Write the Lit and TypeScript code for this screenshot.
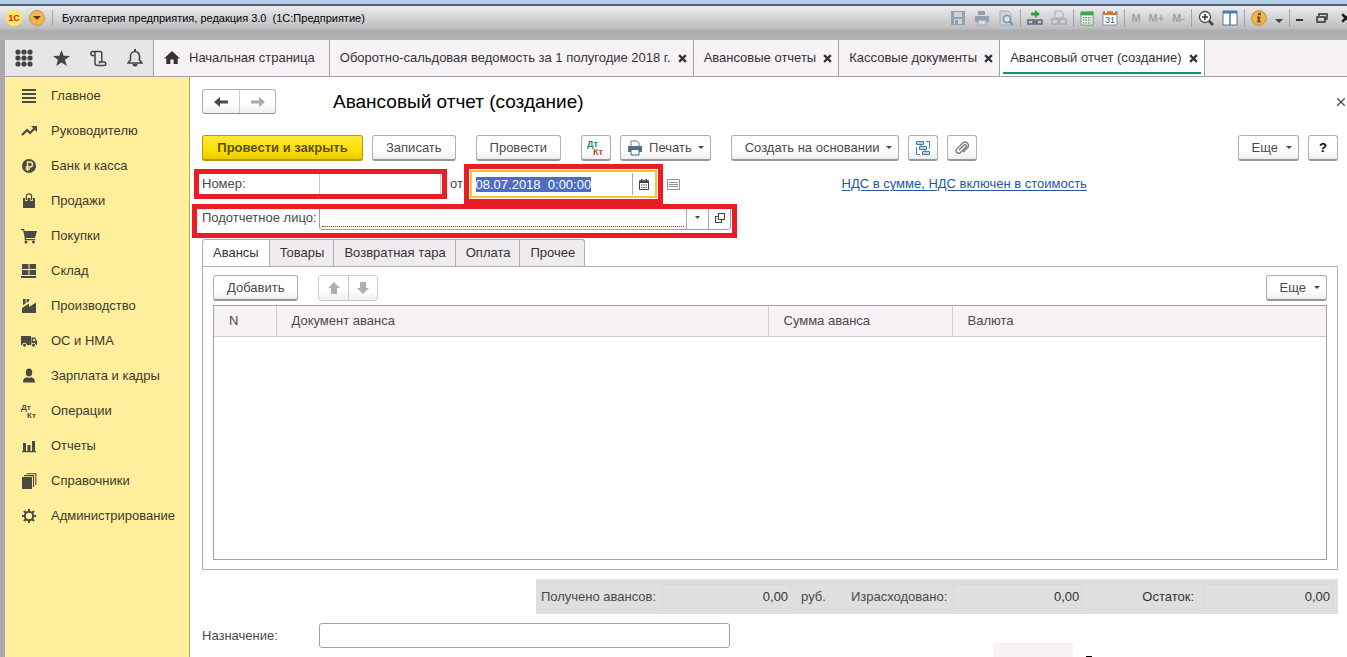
import { LitElement, html, css, svg, nothing } from "lit";
import { customElement, state, query } from "lit/decorators.js";
import { classMap } from "lit/directives/class-map.js";

const icon = (w: number, h: number, body: unknown, vb = `0 0 ${w} ${h}`) =>
  html`<svg class="ico" width=${w} height=${h} viewBox=${vb} fill="currentColor" aria-hidden="true">${body}</svg>`;

const caret = () => icon(6, 3, svg`<path d="M0 0h6L3 3z"/>`);
const cross = (size = 8, width = 2) =>
  icon(size, size, svg`<path d="M1 1l6 6M7 1L1 7" stroke="currentColor" stroke-width=${width} fill="none"/>`, "0 0 8 8");

const arrowLeft = svg`<path d="M0 5l6-5v3.600h8v2.800H6V10z"/>`;
const arrowRight = svg`<path d="M14 5L8 0v3.600H0v2.800h8V10z"/>`;

const sections = [
  { name: "Главное", body: svg`<path d="M1 1h14v2H1zM1 5h14v2H1zM1 9h14v2H1zM1 13h14v2H1z"/>` },
  { name: "Руководителю", body: svg`<path d="M1 12l5-5 3 3 5-5" fill="none" stroke="currentColor" stroke-width="2.2"/><path d="M10 3h6v6z"/>` },
  { name: "Банк и касса", body: svg`<circle cx="8" cy="8" r="7"/><path d="M6.5 13V4H9a2.3 2.3 0 0 1 0 5H4.6M4.6 11H9" fill="none" stroke="#ffee9c" stroke-width="1.4"/>` },
  { name: "Продажи", body: svg`<path d="M2 5h12v10H2z"/><path d="M5.4 8V3a2.6 2 0 0 1 5.200 0v5" fill="none" stroke="#ffee9c" stroke-width="2.4"/><path d="M5.400 7V3a2.600 2.200 0 0 1 5.200 0v4" fill="none" stroke="currentColor" stroke-width="1.200"/>` },
  { name: "Покупки", body: svg`<path d="M0 1h3l.6 2H16l-2 7H5v1h9v1.300H3.700V10L2.200 2.300H0z"/><circle cx="5" cy="14" r="1.500"/><circle cx="12.500" cy="14" r="1.500"/>` },
  { name: "Склад", body: svg`<path d="M1 1h6.500v5H1zM8.500 1H15v5H8.500zM1 7h6.500v5H1zM8.500 7H15v5H8.500zM0 13h15v2H0z"/>` },
  { name: "Производство", body: svg`<path d="M1 15V10l7-4.500V9l7-4.500V15z"/><path d="M2 1h2.600v4.500L2 7.200zM5.600 1h2.600v2.300L5.600 5z"/>` },
  { name: "ОС и НМА", body: svg`<path d="M0 3h10v9H0zM10.500 4.500H14l2 3.500v4h-5.500z"/><path d="M12 6h1.500l1 2H12z" fill="#ffee9c"/><circle cx="3.500" cy="12.200" r="2" stroke="#ffee9c" stroke-width="1"/><circle cx="12.500" cy="12.200" r="2" stroke="#ffee9c" stroke-width="1"/>` },
  { name: "Зарплата и кадры", body: svg`<ellipse cx="8" cy="4.500" rx="3.200" ry="4"/><path d="M2 14.500c0-4 2-5 4-5.300L8 10l2-.8c2 .3 4 1.300 4 5.300z"/>` },
  { name: "Операции", body: svg`<text x="0" y="7" font-size="8" font-weight="700">Дт</text><text x="6" y="15" font-size="8" font-weight="700">Кт</text>` },
  { name: "Отчеты", body: svg`<path d="M1 13h14v1.300H1zM2 5h3v8H2zM6.500 7h3v6h-3zM11 3h3v10h-3z"/>` },
  { name: "Справочники", body: svg`<path d="M1 4h10v12H1z"/><path d="M3 2.600h9.500V14M5.500.700h9.300V12" fill="none" stroke="currentColor" stroke-width="1.100"/>` },
  { name: "Администрирование", body: svg`<circle cx="8" cy="8" r="4.200" fill="none" stroke="currentColor" stroke-width="2"/><path d="M8 1v3M8 12v3M1 8h3M12 8h3M3 3l2.200 2.200M10.800 10.800L13 13M13 3l-2.200 2.200M5.200 10.800L3 13" stroke="currentColor" stroke-width="2"/>` },
];

const windows = [
  "Оборотно-сальдовая ведомость за 1 полугодие 2018 г.",
  "Авансовые отчеты",
  "Кассовые документы",
  "Авансовый отчет (создание)",
];

const pages = ["Авансы", "Товары", "Возвратная тара", "Оплата", "Прочее"];

const printer = svg`<path d="M4 1h6l2 2v4H4z" fill="#fff" stroke="#6d7b88"/><path d="M1 6h14v6H1z" fill="#4c7391"/><path d="M4 9.500h8V15H4z" fill="#fff" stroke="#4c6478"/>`;

const tools = [
  { label: "Сохранить", w: 16, gap: false, body: svg`<g fill="#93a1ae"><path d="M1 1h14v14H1z"/><path d="M4 2h8v5H4zM4 9h8v5H4z" fill="#cdd4da"/><path d="M5 10h3v4H5z"/></g>` },
  { label: "Печать", w: 16, gap: false, body: svg`<g fill="#93a1ae"><path d="M4 1h7v4H4zM1 6h14v6H1z"/><path d="M4 10h8v5H4z" fill="#d9dde1" stroke="#93a1ae"/></g>` },
  { label: "Просмотр", w: 16, gap: false, body: svg`<path d="M2 1h8l3 3v11H2z" fill="#ccd3d9" stroke="#a3afb9"/><circle cx="9" cy="9" r="3.500" fill="#dfe5ea" stroke="#7890a4" stroke-width="1.500"/><path d="M11.500 11.500L15 15" stroke="#7890a4" stroke-width="2"/>` },
  { label: "Получить ссылку", w: 16, gap: true, body: svg`<path d="M4 2.500h4V0l5 4-5 4V5.500H4z" fill="#2fa62f"/><path d="M1 10h6v4H1zM9 10h6v4H9zM5 12h6" fill="none" stroke="#5a6672" stroke-width="1.500"/>` },
  { label: "Перейти по ссылке", w: 16, gap: false, body: svg`<path d="M4 1h6l2 2v5H4z" fill="#dcdfe2" stroke="#a2a9b0"/><path d="M1 9h6v5H1zM9 9h6v5H9z" fill="#d2d5d8" stroke="#a2a9b0" stroke-width="1.500"/>` },
  { label: "Калькулятор", w: 14, gap: true, body: svg`<path d="M1 1h14v15H1z" fill="#f3f6f3" stroke="#5d9868"/><path d="M1 1h14v4H1z" fill="#38a54a"/><path d="M3 7.500h10M3 10.500h10M3 13.500h10" stroke="#5b8e68" stroke-width="1.500" stroke-dasharray="2 1"/>` },
  { label: "Календарь", w: 16, gap: false, body: svg`<path d="M1 2h14v13H1z" fill="#fff" stroke="#8c8f94"/><path d="M1 1.500h14V5H1z" fill="#c8783d"/><path d="M4 0v3M12 0v3" stroke="#fff" stroke-width="1.500"/><text x="3" y="13" font-size="9" fill="#3d5a80">31</text>` },
];

@customElement("app-root")
export class AppRoot extends LitElement {
  @state() private page = 0;
  @query("#date") private dateField!: HTMLInputElement;

  static styles = css`
    :host {
      display: flex;
      flex-direction: column;
      height: 100vh;
      overflow: hidden;
      box-sizing: border-box;
      font: 13px/16px "Liberation Sans", Arial, sans-serif;
      color: #4a4a4a;
      background: #fff;
    }
    *, *::before, *::after { box-sizing: border-box; }
    button, input { font: inherit; color: inherit; margin: 0; }
    button { background: none; border: 0; padding: 0; }
    h1, ul { margin: 0; padding: 0; font-weight: 400; }
    .ico { display: block; flex: none; }

    .backdrop { flex: none; height: 6px; background: #b3cde9; border-bottom: 2px solid #59636f; }
    .titlebar {
      flex: none;
      height: 34px;
      padding: 0 0 10px 6px;
      display: flex;
      align-items: center;
      color: #1a1a1a;
      background: linear-gradient(#ececee 0, #d8d8da 10px, #bcbcbf 23px, #adadb0 24px, #b1b1b4 34px);
    }
    .brand, .drop { width: 16px; height: 16px; border-radius: 50%; display: grid; place-items: center; }
    .brand { background: #ffe75c; color: #d22a1c; font: bold 9px/16px "Liberation Sans", sans-serif; }
    .drop { margin-left: 7px; background: #f3b54f; border: 1px solid #c99345; color: #5b3a10; }
    .apptitle { margin-left: 7px; padding-left: 9px; border-left: 1px solid #a6a6a9; font-size: 11px; white-space: nowrap; color: #000; }
    .tools { margin-left: auto; display: flex; align-items: center; gap: 8px; }
    .tools button { display: block; }
    .rule { width: 1px; height: 18px; background: #a3a3a6; margin: 0 -2px; }
    .memory { display: flex; gap: 8px; font-weight: 700; font-size: 11px; color: #a99e98; }
    .winctl { display: flex; align-items: center; gap: 13px; margin: 0 -4px 0 0; }

    .frame { flex: 1; min-height: 0; display: flex; flex-direction: column; border-left: 5px solid #a9a9ac; }
    .tabs { flex: none; height: 37px; display: flex; background: #f6f2f6; border-bottom: 1px solid #a0a0a0; color: #333; }
    .quick { width: 149px; display: flex; align-items: center; justify-content: space-between; padding: 0 10px; background: #e6e6e6; border-right: 1px solid #a0a0a0; color: #444; }
    .tab { display: flex; align-items: center; gap: 7px; padding: 0 6px 0 10px; border-right: 1px solid #a0a0a0; white-space: nowrap; position: relative; }
    .tab.home { padding-right: 14px; gap: 9px; }
    .tab.active { background: #fff; }
    .tab.active::after { content: ""; position: absolute; left: 3px; right: 3px; bottom: 2px; height: 2px; background: #18925a; }

    .body { flex: 1; min-height: 0; display: flex; }
    .sections { flex: none; width: 185px; background: #ffee9c; border-right: 1px solid #b5a642; padding-top: 1px; list-style: none; color: #3c3a2c; }
    .sections a { display: flex; align-items: center; gap: 14px; height: 35px; padding-left: 16px; color: inherit; text-decoration: none; white-space: nowrap; }
    .sections .ico { color: #4b4a42; }

    .main { flex: 1; min-width: 0; padding: 12px 9px 0 12px; display: flex; flex-direction: column; }
    .head { display: flex; align-items: center; height: 25px; flex: none; }
    .head h1 { flex: 1; margin-left: 57px; font-size: 19px; line-height: 24px; color: #000; }
    .head .close { margin-right: -8px; }
    .pair { display: flex; border: 1px solid #b0b0b0; border-bottom-color: #8f8f8f; border-radius: 3px; background: linear-gradient(#fff 60%, #f0eef0); }
    .pair button { width: 36px; height: 23px; display: grid; place-items: center; }
    .pair button + button { border-left: 1px solid #ccc; color: #aaa; }
    .pair.move { border-color: #ccc; color: #a9b1b8; }
    .pair.move button { width: 29px; height: 24px; }
    .pair.move button + button { color: inherit; }

    .bar { display: flex; gap: 20px; margin-top: 21px; flex: none; }
    .group { display: flex; gap: 9px; }
    .end { margin-left: auto; }
    .btn {
      height: 26px;
      min-width: 30px;
      padding: 0 13px;
      display: flex;
      align-items: center;
      justify-content: center;
      gap: 6px;
      white-space: nowrap;
      border: 1px solid #b0b0b0;
      border-bottom: 2px solid #969696;
      border-radius: 3px;
      background: linear-gradient(#fff 60%, #f0eef0);
    }
    .btn.primary { min-width: 161px; font-weight: 700; color: #594f14; border-color: #b39b10; background: linear-gradient(#ffe93a, #fddf00 60%, #eccb00); }
    .btn.menu { padding-right: 6px; }
    .btn.more { min-width: 61px; gap: 8px; }
    .btn.print { padding-left: 6px; }
    .btn.square { padding: 0; width: 30px; }
    .btn.help { padding: 0; font-weight: 700; color: #000; }

    .row { display: flex; align-items: center; flex: none; }
    .row.number { height: 26px; margin-top: 10px; }
    .row.person { height: 25px; margin-top: 8px; }
    .row label.key { width: 117px; flex: none; }
    .marked { position: relative; display: flex; align-items: center; align-self: stretch; }
    .marked::before { content: ""; position: absolute; border: 5px solid #ea1c24; pointer-events: none; z-index: 1; }
    .m-number::before { inset: -2px -6px -2px -8px; }
    .m-date::before { inset: -7px -6px; }
    .m-person::before { inset: -1px -6px -8px -10px; }
    .num { width: 122px; height: 24px; border: 1px solid #ccc; background: #fff; }
    .from { margin: 0 3px 0 9px; }
    .date { display: flex; align-items: center; width: 187px; height: 28px; border: 2px solid #ffc42e; background: #fff; color: #333; }
    .date input { width: 160px; height: 24px; padding: 0 4px; border: 0; outline: 0; }
    .date input::selection { background: #4f6bc4; color: #fff; }
    .date button { height: 22px; flex: 1; display: grid; place-items: center; border-left: 1px solid #aaa; color: #444; }
    .listicon { margin-left: 10px; color: #8a94a0; }
    .vat { margin-left: 162px; color: #2659a3; text-underline-offset: 2px; white-space: nowrap; }
    .combo { display: flex; width: 412px; height: 25px; border: 1px solid #a0a0a0; border-radius: 3px; }
    .combo .well { flex: 1; padding: 0 2px 2px; display: flex; }
    .combo input { width: 100%; border: 0; border-bottom: 1px dotted #d02020; outline: 0; background: none; }
    .combo button { width: 22px; display: grid; place-items: center; border-left: 1px solid #aaa; }

    .pages { display: flex; margin-top: 9px; flex: none; }
    .pages button { height: 28px; padding: 0 9px 0 10px; margin-bottom: -1px; border: 1px solid #b0b0b0; border-left-width: 0; background: #efebef; color: #333; }
    .pages button:first-child { padding-right: 10px; border-left-width: 1px; border-top-left-radius: 3px; }
    .pages button:last-child { border-top-right-radius: 3px; }
    .pages button.on { background: #fff; border-bottom-color: #fff; }
    .panel { flex: none; border: 1px solid #b0b0b0; padding: 8px 10px 9px; }
    .cmds { display: flex; gap: 20px; margin-bottom: 4px; }
    .grid { border: 1px solid #a0a0a0; min-height: 255px; }
    table { width: 100%; border-collapse: collapse; table-layout: fixed; }
    th { height: 30px; padding: 0 15px; text-align: left; font-weight: 400; background: #f6f2f6; border-bottom: 1px solid #ccc; border-right: 1px solid #d0d0d0; }
    th:last-child { border-right: 0; }
    .c-n { width: 62px; }
    .c-doc { width: 492px; }
    .c-sum { width: 184px; }

    .totals { flex: none; align-self: flex-end; margin-top: 9px; height: 35px; padding: 0 5px; display: flex; align-items: center; background: #dfdfdf; white-space: nowrap; }
    .totals label { display: flex; align-items: center; gap: 6px; }
    .totals input { width: 129px; height: 25px; padding: 0 2px; text-align: right; border: 1px solid #d8d8d8; background: none; color: #333; }
    .unit { margin: 0 25px 0 10px; }
    .rest { margin-left: 60px; }
    .rest label { gap: 10px; color: #333; }
    .purpose { margin-top: 9px; }
    .purpose input { width: 411px; height: 25px; border: 1px solid #a0a0a0; border-radius: 3px; }
    .next { flex: none; align-self: flex-end; display: flex; gap: 13px; margin: -5px 246px 0 0; align-items: flex-end; }
    .chip { width: 80px; height: 14px; background: #f6f2f6; }
    .stub { width: 6px; height: 1px; background: #000; }
  `;

  firstUpdated() {
    this.dateField.focus();
    this.dateField.select();
  }

  private titlebar() {
    return html`<header class="titlebar">
      <span class="brand">1С</span>
      <button class="drop" aria-label="Меню">${icon(8, 4, svg`<path d="M0 0h8L4 4z"/>`)}</button>
      <span class="apptitle">Бухгалтерия предприятия, редакция 3.0 &nbsp;(1С:Предприятие)</span>
      <div class="tools">
        ${tools.map((t) => html`${t.gap ? html`<i class="rule"></i>` : nothing}<button aria-label=${t.label}>${icon(t.w, 16, t.body, "0 0 16 16")}</button>`)}
        <i class="rule"></i>
        <span class="memory"><button>M</button><button>M+</button><button>M-</button></span>
        <i class="rule"></i>
        <button aria-label="Масштаб">${icon(16, 16, svg`<circle cx="7" cy="7" r="5.500" fill="#fff" stroke="#444" stroke-width="1.300"/><path d="M4 7h6M7 4v6" stroke="#333" stroke-width="1.500"/><path d="M11 11l4 4" stroke="#444" stroke-width="2.500"/>`)}</button>
        <button aria-label="Панели">${icon(16, 16, svg`<path d="M1 1h14v14H1z" fill="#fff" stroke="#55789b"/><path d="M1 1h14v2.500H1z" fill="#3b7fc4"/><path d="M8 2v13" stroke="#55789b" stroke-width="1.500"/>`)}</button>
        <i class="rule"></i>
        <button aria-label="Справка">${icon(16, 16, svg`<circle cx="8" cy="8" r="7.300" fill="#f5b63f" stroke="#b98a3d"/><path d="M7 3h3v2.200H7zM6 6.500h3.600L8.700 11H10v1.500H6l.8-4.500H6z" fill="#655540"/>`)}</button>
        <button aria-label="Ещё">${icon(8, 10, svg`<path d="M0 6h8L4 10z" fill="#444"/>`)}</button>
        <i class="rule"></i>
        <div class="winctl">
          <button aria-label="Свернуть">${icon(7, 8, svg`<path d="M0 5h7v2H0z" fill="#333"/>`)}</button>
          <button aria-label="Восстановить">${icon(12, 10, svg`<path d="M3 3V1h8v5H9M1 4h8v5H1z" fill="none" stroke="#333" stroke-width="1.500"/>`)}</button>
          <button aria-label="Закрыть">${cross(10)}</button>
        </div>
      </div>
    </header>`;
  }

  private tabbar() {
    return html`<nav class="tabs" aria-label="Открытые окна">
      <div class="quick">
        <button aria-label="Функции">${icon(18, 18, svg`${[3, 9, 15].map((y) => [3, 9, 15].map((x) => svg`<circle cx=${x} cy=${y} r="2.600"/>`))}`)}</button>
        <button aria-label="Избранное">${icon(17, 16, svg`<path d="M8.500 0l2.200 5.800 6.300.2-5 3.800L13.800 16l-5.300-3.600L3.200 16 5 9.800 0 6l6.300-.2z"/>`)}</button>
        <button aria-label="История">${icon(17, 17, svg`<path d="M5 5.500H2.800A1.900 1.900 0 0 1 2.800 1.500H10A1.800 1.800 0 0 1 11.800 3.300v8.700M3 1.500A2 2 0 0 1 5 3.500v9.500a2.500 2.500 0 0 0 2.500 2.500h6.500a1.700 1.700 0 0 0 0-3.500H9.500v1.500" fill="none" stroke="currentColor" stroke-width="1.500"/>`)}</button>
        <button aria-label="Оповещения">${icon(16, 18, svg`<path d="M1 14h14l-2.500-3V7a4.500 4.500 0 0 0-9 0v4z" fill="none" stroke="currentColor" stroke-width="1.600"/><path d="M7 0h2v3H7zM5.500 15h5a2.500 2.500 0 0 1-5 0z"/>`)}</button>
      </div>
      <div class="tab home">${icon(16, 14, svg`<path d="M8 0l8 7.500h-2.300V13H9.600V8.500H6.400V13H2.300V7.500H0z"/>`)}<span>Начальная страница</span></div>
      ${windows.map(
        (name, i) => html`<div class=${classMap({ tab: true, active: i === windows.length - 1 })}>
          <span>${name}</span><button aria-label="Закрыть вкладку">${cross(9)}</button>
        </div>`,
      )}
    </nav>`;
  }

  private toolbar() {
    return html`<div class="bar">
      <div class="group"><button class="btn primary">Провести и закрыть</button><button class="btn">Записать</button></div>
      <button class="btn">Провести</button>
      <div class="group">
        <button class="btn square" aria-label="Дт Кт">${icon(18, 18, svg`<text x="0" y="8" font-size="9" font-weight="700" fill="#188a4e">Дт</text><text x="6" y="16" font-size="9" font-weight="700" fill="#c4433a">Кт</text>`)}</button>
        <button class="btn menu print">${icon(16, 16, printer)}Печать${caret()}</button>
      </div>
      <div class="group">
        <button class="btn menu">Создать на основании${caret()}</button>
        <button class="btn square" aria-label="Структура подчиненности">${icon(16, 16, svg`<g fill="#b9d4ea" stroke="#4b7ca5"><path d="M1.500 1.500h7v3h-7zM4.500 6.500h7v3h-7zM7.500 11.500h7v3h-7z"/><path d="M11 1.500h3.500v7M1.500 7v7.500H5M6 5v1M10 10v1" fill="none"/></g>`)}</button>
        <button class="btn square" aria-label="Файлы">${icon(14, 14, svg`<path d="M4 9l5-5a1.400 1.400 0 0 1 2 2l-5.500 5.500a2.500 2.500 0 0 1-3.600-3.600L7.700 2a3.400 3.400 0 0 1 4.800 4.800L8 11.300" fill="none" stroke="#777" stroke-width="1.300"/>`)}</button>
      </div>
      <div class="group end"><button class="btn menu more">Еще${caret()}</button><button class="btn help">?</button></div>
    </div>`;
  }

  private fields() {
    return html`<div class="row number">
        <div class="marked m-number"><label class="key" for="number">Номер:</label><input class="num" id="number" /></div>
        <label class="from" for="date">от:</label>
        <div class="marked m-date">
          <div class="date">
            <input id="date" value="08.07.2018  0:00:00" />
            <button aria-label="Выбрать дату">${icon(10, 11, svg`<path d="M.5 2h9v8.500h-9z" fill="none" stroke="currentColor"/><path d="M0 1.500h10V4H0zM2 0h1.500v2H2zM6.500 0H8v2H6.500z"/><path d="M2 6h6M2 8.500h6" stroke="currentColor" stroke-dasharray="1.500 .8"/>`)}</button>
          </div>
        </div>
        <button class="listicon" aria-label="Список">${icon(13, 11, svg`<path d="M.5.500h12v10H.5z" fill="none" stroke="currentColor"/><path d="M2 3.500h9M2 5.500h9M2 7.500h9" stroke="currentColor"/>`)}</button>
        <a class="vat" href="#vat">НДС в сумме, НДС включен в стоимость</a>
      </div>
      <div class="row person">
        <div class="marked m-person">
          <label class="key" for="person">Подотчетное лицо:</label>
          <div class="combo">
            <div class="well"><input id="person" /></div>
            <button aria-label="Выбрать">${icon(5, 3, svg`<path d="M0 0h5L2.500 3z"/>`)}</button>
            <button aria-label="Открыть">${icon(10, 10, svg`<path d="M3.500.500h6v6h-6zM3 3.500H.5v6h6V7" fill="none" stroke="currentColor" stroke-width="1.200"/>`)}</button>
          </div>
        </div>
      </div>`;
  }

  private panel() {
    return html`<div class="pages" role="tablist">
        ${pages.map((p, i) => html`<button role="tab" aria-selected=${i === this.page} class=${classMap({ on: i === this.page })} @click=${() => (this.page = i)}>${p}</button>`)}
      </div>
      <section class="panel">
        <div class="cmds">
          <button class="btn">Добавить</button>
          <div class="pair move">
            <button aria-label="Вверх">${icon(12, 12, svg`<path d="M6 0l6 6H9v6H3V6H0z"/>`)}</button>
            <button aria-label="Вниз">${icon(12, 12, svg`<path d="M6 12L0 6h3V0h6v6h3z"/>`)}</button>
          </div>
          <button class="btn menu more end">Еще${caret()}</button>
        </div>
        <div class="grid">
          <table>
            <thead><tr><th class="c-n">N</th><th class="c-doc">Документ аванса</th><th class="c-sum">Сумма аванса</th><th>Валюта</th></tr></thead>
          </table>
        </div>
      </section>`;
  }

  render() {
    return html`<div class="backdrop"></div>
      ${this.titlebar()}
      <div class="frame">
        ${this.tabbar()}
        <div class="body">
          <ul class="sections">
            ${sections.map((s) => html`<li><a href="#section">${icon(16, 16, s.body)}<span>${s.name}</span></a></li>`)}
          </ul>
          <main class="main">
            <div class="head">
              <div class="pair"><button aria-label="Назад">${icon(14, 10, arrowLeft)}</button><button aria-label="Вперед">${icon(14, 10, arrowRight)}</button></div>
              <h1>Авансовый отчет (создание)</h1>
              <button class="close" aria-label="Закрыть">${cross(10, 1)}</button>
            </div>
            ${this.toolbar()} ${this.fields()} ${this.panel()}
            <div class="totals">
              <label>Получено авансов:<input readonly value="0,00" /></label><span class="unit">руб.</span>
              <label>Израсходовано:<input readonly value="0,00" /></label>
              <div class="rest"><label>Остаток:<input readonly value="0,00" /></label></div>
            </div>
            <div class="row purpose"><label class="key" for="purpose">Назначение:</label><input id="purpose" /></div>
            <div class="next"><span class="chip"></span><span class="stub"></span></div>
          </main>
        </div>
      </div>`;
  }
}
